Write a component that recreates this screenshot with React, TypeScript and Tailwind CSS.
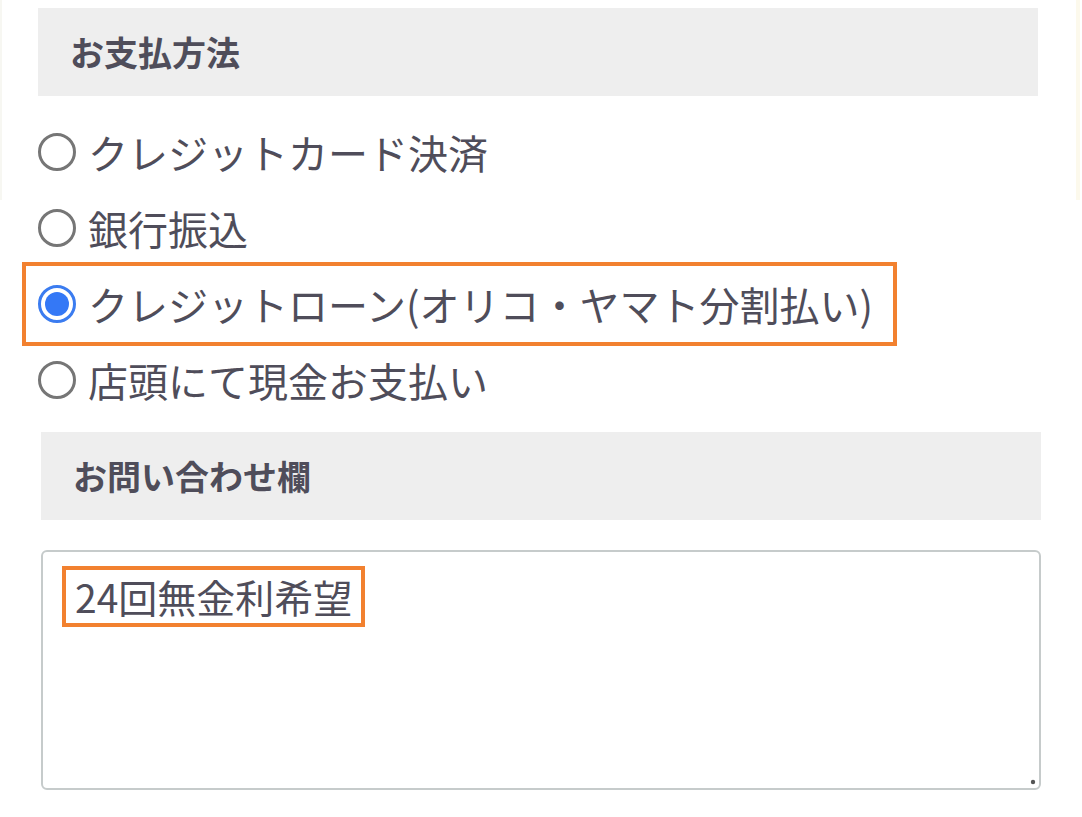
import React from 'react';

const font = { fontFamily: '"Noto Sans CJK JP", "Noto Sans", sans-serif' };

const options = [
  'クレジットカード決済',
  '銀行振込',
  'クレジットローン(オリコ・ヤマト分割払い)',
  '店頭にて現金お支払い',
];

const Radio: React.FC<{ checked: boolean }> = ({ checked }) =>
  checked ? (
    <span className="w-[38px] h-[38px] shrink-0 rounded-full border-[3px] border-[#3b7cf0] bg-white flex items-center justify-center">
      <span className="w-[24px] h-[24px] rounded-full bg-[#3478f6]" />
    </span>
  ) : (
    <span className="w-[38px] h-[38px] shrink-0 rounded-full border-[3px] border-[#767676] bg-white" />
  );

const App: React.FC = () => {
  return (
    <div className="relative w-[1082px] h-[817px] bg-white overflow-hidden text-[#4f4d5a]" style={font}>
      {/* faint page edges from the surrounding layout */}
      <div className="absolute left-0 top-0 w-[2px] h-[200px] bg-[#f7f7f2]" />
      <div className="absolute right-[2px] top-0 w-[4px] h-[200px] bg-[#fcf9ec]" />

      <div className="pt-[8px] pl-[38px] pr-[44px] flex flex-col">
        {/* お支払方法 */}
        <div className="h-[88px] bg-[#eeeeee] flex items-center pl-[32px]">
          <h2 className="text-[34px] font-bold leading-none">お支払方法</h2>
        </div>

        <div className="mt-[18px] flex flex-col items-start">
          {options.map((label, i) => (
            <label
              key={label}
              className={
                'h-[76px] flex items-center gap-[12px] ' +
                (i === 2 ? '-ml-[12px] pl-[12px] pr-[20px] ring-4 ring-[#f2812f]' : '')
              }
            >
              <Radio checked={i === 2} />
              <span className="text-[40px] leading-none">{label}</span>
            </label>
          ))}
        </div>

        {/* お問い合わせ欄 */}
        <div className="mt-[14px] ml-[3px] -mr-[3px] h-[88px] bg-[#eeeeee] flex items-center pl-[32px]">
          <h2 className="text-[34px] font-bold leading-none">お問い合わせ欄</h2>
        </div>

        <div className="relative mt-[30px] ml-[3px] -mr-[3px] h-[240px] border-2 border-[#c6cbcb] rounded-[6px] bg-white pl-[19px] pt-[14px]">
          <span className="inline-block px-[9px] py-[7px] border-4 border-[#f2812f] text-[39px] leading-none">
            24回無金利希望
          </span>
          <svg className="absolute right-[2px] bottom-[2px]" width="10" height="10" viewBox="0 0 10 10">
            <circle cx="6" cy="6" r="2.2" fill="#555" />
          </svg>
        </div>
      </div>
    </div>
  );
};

export default App;
